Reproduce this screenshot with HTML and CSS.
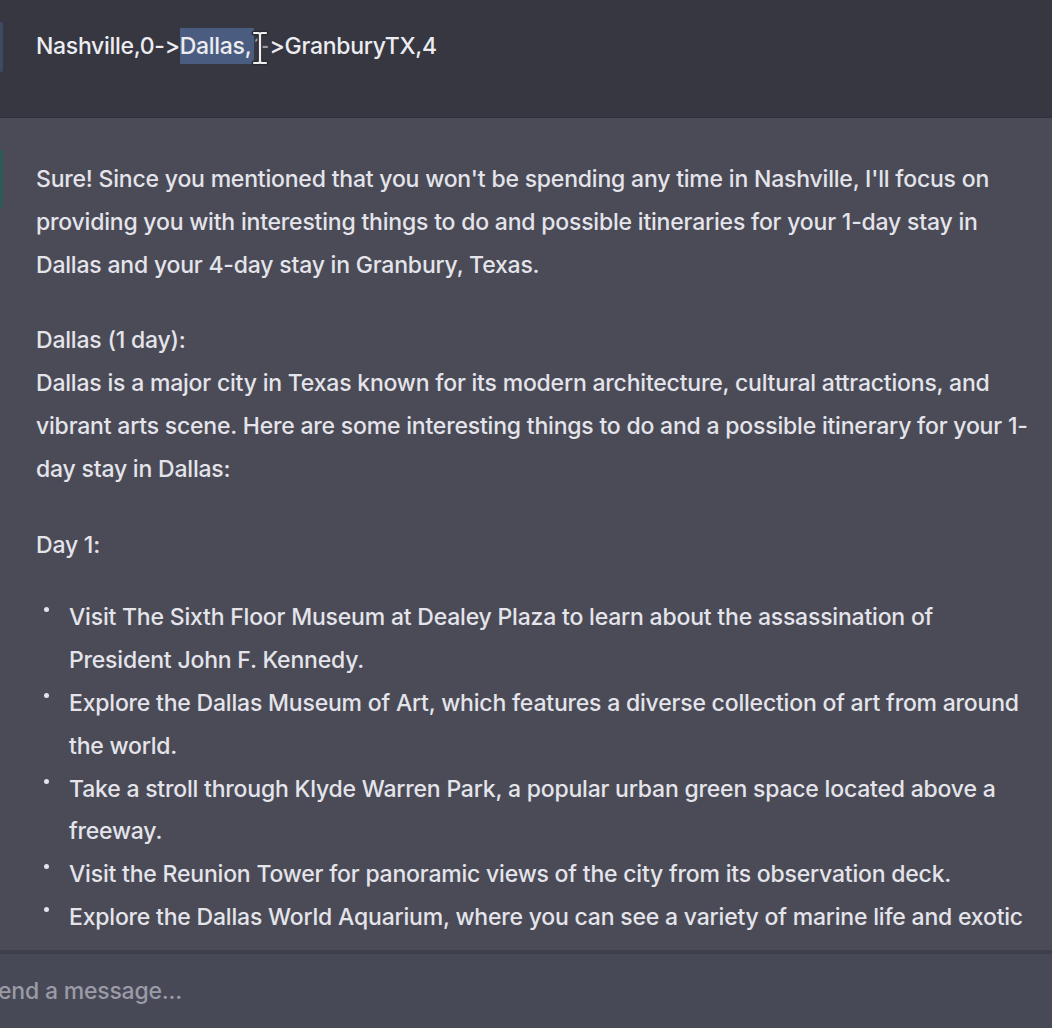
FILE: index.html
```html
<!DOCTYPE html>
<html lang="en">
<head>
<meta charset="utf-8">
<title>Chat</title>
<link rel="stylesheet" href="styles.css">
</head>
<body>
<div class="app">
  <section class="msg msg-user">
    <span class="avatar-edge avatar-user"></span>
    <p class="user-text">Nashville,0-&gt;<span class="sel">Dallas,</span><span class="caret-wrap">1-<svg class="ibeam" viewBox="0 0 18 36" width="18" height="36" aria-hidden="true"><path d="M3 3h4q2 0 2 2q0-2 2-2h4M9 5v26M3 33h4q2 0 2-2q0 2 2 2h4" fill="none" stroke="#2a2b33" stroke-width="5" stroke-linecap="round" stroke-linejoin="round"/><path d="M3 3h4q2 0 2 2q0-2 2-2h4M9 5v26M3 33h4q2 0 2-2q0 2 2 2h4" fill="none" stroke="#f0f0f2" stroke-width="2.2" stroke-linecap="round" stroke-linejoin="round"/></svg></span>&gt;GranburyTX,4</p>
  </section>
  <section class="msg msg-bot">
    <span class="avatar-edge avatar-bot"></span>
    <div class="bot-body">
      <p>Sure! Since you mentioned that you won't be spending any time in Nashville, I'll focus on<br>providing you with interesting things to do and possible itineraries for your 1-day stay in<br>Dallas and your 4-day stay in Granbury, Texas.</p>
      <p>Dallas (1 day):<br>Dallas is a major city in Texas known for its modern architecture, cultural attractions, and<br>vibrant arts scene. Here are some interesting things to do and a possible itinerary for your 1-<br>day stay in Dallas:</p>
      <p class="last-p">Day 1:</p>
      <ul class="list">
        <li>Visit The Sixth Floor Museum at Dealey Plaza to learn about the assassination of<br>President John F. Kennedy.</li>
        <li>Explore the Dallas Museum of Art, which features a diverse collection of art from around<br>the world.</li>
        <li>Take a stroll through Klyde Warren Park, a popular urban green space located above a<br>freeway.</li>
        <li>Visit the Reunion Tower for panoramic views of the city from its observation deck.</li>
        <li>Explore the Dallas World Aquarium, where you can see a variety of marine life and exotic</li>
      </ul>
    </div>
  </section>
  <footer class="composer">
    <div class="composer-input">end a message...</div>
  </footer>
</div>
</body>
</html>
```
FILE: styles.css
```css
html, body {
  margin: 0;
  padding: 0;
  height: 100%;
  background: #4a4b57;
}
body {
  font-family: "Inter", "Liberation Sans", sans-serif;
  color: #e4e4ea;
  overflow: hidden;
}
.app {
  display: flex;
  flex-direction: column;
  height: 1028px;
}
.msg {
  position: relative;
}
.msg p {
  margin: 0;
}
.avatar-edge {
  position: absolute;
  left: 0;
  width: 3px;
  border-radius: 0 2px 2px 0;
}
.avatar-user {
  top: 22px;
  height: 50px;
  background: #3c4a66;
}
.avatar-bot {
  top: 32px;
  height: 58px;
  background: #2d5a55;
}
.msg-user {
  flex: 0 0 118px;
  background: #363741;
  box-sizing: border-box;
  padding: 25px 0 0 36px;
  border-bottom: 1px solid #2f3039;
}
.user-text {
  font-size: 23px;
  font-weight: 500;
  letter-spacing: -0.3px;
  line-height: 42px;
  color: #ececf1;
}
.sel {
  background: #4a5d80;
  padding: 4px 3px 4px 0;
}
.caret-wrap {
  position: relative;
  letter-spacing: -5px;
  color: #9a9caa;
  margin-right: 5px;
}
.ibeam {
  position: absolute;
  left: -3px;
  top: -2px;
}
.msg-bot {
  flex: 1 1 auto;
  min-height: 0;
  overflow: hidden;
  background: #4a4b57;
  padding: 40px 0 0 36px;
}
.bot-body {
  font-size: 23px;
  font-weight: 500;
  letter-spacing: -0.2px;
  line-height: 42.8px;
  white-space: nowrap;
}
.bot-body p {
  margin-bottom: 33px;
}
.bot-body .last-p {
  margin-bottom: 30px;
}
.list {
  list-style: none;
  margin: 0;
  padding: 0;
}
.list li {
  position: relative;
  padding-left: 33px;
}
.list li::before {
  content: "";
  position: absolute;
  left: 8px;
  top: 11px;
  width: 5px;
  height: 5px;
  border-radius: 50%;
  background: #e4e4ea;
}
.composer {
  flex: 0 0 78px;
  background: #474956;
  border-top: 4px solid #3d3f4a;
  box-sizing: border-box;
  display: flex;
  align-items: center;
}
.composer-input {
  font-size: 23px;
  font-weight: 500;
  letter-spacing: -0.2px;
  color: #9a9ba6;
  margin-left: -2px;
}
```
